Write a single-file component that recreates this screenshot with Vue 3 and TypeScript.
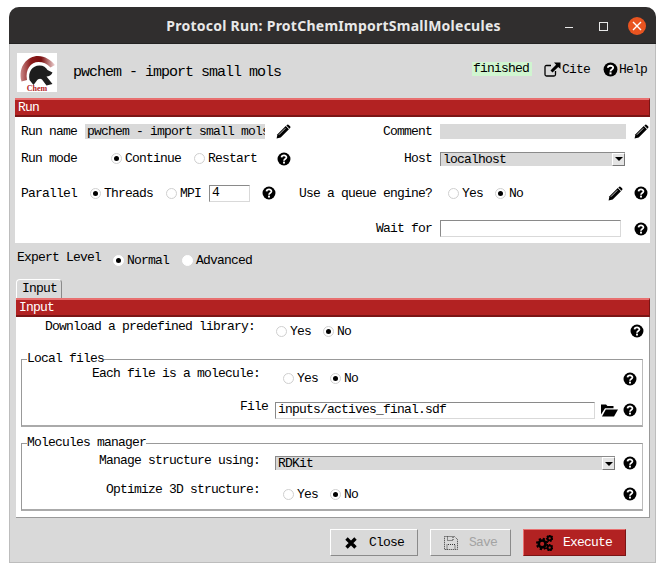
<template>
  <div class="window">
    <svg class="defs" width="0" height="0" aria-hidden="true">
      <symbol id="i-help" viewBox="0 0 16 16">
        <circle cx="8" cy="8" r="7.4" fill="#000" />
        <path d="M5.2 6.2C5.4 3.2 10.8 3.2 10.8 6.1C10.8 8 8 8 8 10" fill="none" stroke="#fff" stroke-width="2" />
        <rect x="6.9" y="11" width="2.2" height="2.2" fill="#fff" />
      </symbol>
      <symbol id="i-pencil" viewBox="0 0 16 16">
        <path d="M0.6 15.4L1.6 11L10.4 2.2L13.8 5.6L5 14.4Z" fill="#000" />
        <path d="M11.4 1.2C12.2 .4 13 .4 13.8 1.2L14.8 2.2C15.6 3 15.6 3.8 14.8 4.6L14.4 5L11 1.6Z" fill="#000" />
        <path d="M3 11.5L10 4.5" stroke="#fff" stroke-width=".8" />
      </symbol>
      <symbol id="i-folder" viewBox="0 0 17 14">
        <path d="M0 11.5V1.5H5L6.5 3H12.5V5.2H4L0 11.5Z" fill="#000" />
        <path d="M1 13.5L4.8 6.5H17L13 13.5Z" fill="#000" />
      </symbol>
      <symbol id="i-gears" viewBox="0 0 18 17">
        <circle cx="6.5" cy="9.5" r="3.6" fill="none" stroke="#000" stroke-width="2.8" />
        <circle cx="6.5" cy="9.5" r="5.6" fill="none" stroke="#000" stroke-width="2" stroke-dasharray="2.4 2" />
        <circle cx="14.5" cy="3.5" r="2.2" fill="none" stroke="#000" stroke-width="2" />
        <circle cx="14.5" cy="3.5" r="3.2" fill="none" stroke="#000" stroke-width="1.4" stroke-dasharray="1.6 1.2" />
        <circle cx="14.5" cy="13.5" r="2.2" fill="none" stroke="#000" stroke-width="2" />
        <circle cx="14.5" cy="13.5" r="3.2" fill="none" stroke="#000" stroke-width="1.4" stroke-dasharray="1.6 1.2" />
      </symbol>
    </svg>

    <div class="titlebar">
      <span class="wintitle">Protocol Run: ProtChemImportSmallMolecules</span>
      <span class="wm wm-min" />
      <span class="wm wm-max" />
      <span class="wm wm-close">
        <svg width="10" height="10" viewBox="0 0 10 10"><path d="M1 1L9 9M9 1L1 9" stroke="#fff" stroke-width="1.4" /></svg>
      </span>
    </div>

    <div class="content">
      <div class="header">
        <svg class="logo" width="40" height="39" viewBox="0 0 40 39">
          <defs>
            <linearGradient id="arc2" x1="0" y1="0" x2="1" y2="0">
              <stop offset="0" stop-color="#c98888" />
              <stop offset=".3" stop-color="#8a1a1a" />
              <stop offset=".6" stop-color="#7a1010" />
              <stop offset="1" stop-color="#f0d4d4" />
            </linearGradient>
          </defs>
          <rect width="40" height="39" fill="#fff" />
          <path d="M4.500 28.500C.5 13 11 3 21 3C28 3 34 7 38 12L33.500 14.500C30 10.500 26 9 21.500 9C14 9 8 16 10 27Z" fill="url(#arc2)" />
          <path d="M12.500 27C11 19 15 12.500 22.500 12.500C26.500 12.500 29 14.500 30.500 17L35.500 19.500C34.500 22 32 23.500 29.500 23.500L35.500 31L29.500 32.500L25 26.500C23 25 21 26 19.500 28L16.500 32Z" fill="#1d1d1d" />
          <text x="20" y="37.500" class="logo-text">Chem</text>
        </svg>
        <span class="proto-label">{{ protocolLabel }}</span>
        <span class="status">finished</span>
        <span class="link cite">
          <svg width="17" height="15" viewBox="0 0 17 15">
            <path d="M7 3.500H2.500C1.500 3.500 1 4 1 5V12.500C1 13.500 1.500 14 2.500 14H10C11 14 11.500 13.500 11.500 12.500V9" fill="none" stroke="#000" stroke-width="1.300" />
            <path d="M10 .5H16.500V7L14.200 4.900L8.500 10.500L6.500 8.500L12.100 2.800Z" fill="#000" />
          </svg>
          Cite
        </span>
        <span class="link help-link"><svg width="15" height="15"><use href="#i-help" /></svg>Help</span>
      </div>

      <div class="bar">Run</div>
      <div class="run-panel">
        <div class="run-row r1">
          <div class="left">
            <span class="lbl w65">Run name</span>
            <span class="entry flat name-entry">{{ protocolLabel }}</span>
            <svg class="ic ml11" width="15" height="15"><use href="#i-pencil" /></svg>
          </div>
          <div class="right">
            <span class="lbl rlabel">Comment</span>
            <span class="entry flat comment-entry" />
            <svg class="ic ml8" width="15" height="15"><use href="#i-pencil" /></svg>
          </div>
        </div>

        <div class="run-row r2">
          <div class="left">
            <span class="lbl w90">Run mode</span>
            <span class="radio on"><i />Continue</span>
            <span class="radio ml13"><i />Restart</span>
            <svg class="ic ml20" width="14" height="14"><use href="#i-help" /></svg>
          </div>
          <div class="right">
            <span class="lbl rlabel">Host</span>
            <span class="combo host-combo">localhost<b><u /></b></span>
          </div>
        </div>

        <div class="run-row r3">
          <div class="left">
            <span class="lbl w69">Parallel</span>
            <span class="radio on"><i />Threads</span>
            <span class="radio ml13"><i />MPI</span>
            <span class="entry sunken threads-entry">4</span>
            <svg class="ic ml12" width="14" height="14"><use href="#i-help" /></svg>
          </div>
          <div class="right">
            <span class="lbl rlabel">Use a queue engine?</span>
            <span class="radio ml8"><i />Yes</span>
            <span class="radio on ml12"><i />No</span>
            <svg class="ic ml85" width="15" height="15"><use href="#i-pencil" /></svg>
            <svg class="ic ml11" width="14" height="14"><use href="#i-help" /></svg>
          </div>
        </div>

        <div class="run-row r4">
          <div class="left" />
          <div class="right">
            <span class="lbl rlabel">Wait for</span>
            <span class="entry sunken wait-entry" />
            <svg class="ic ml13" width="14" height="14"><use href="#i-help" /></svg>
          </div>
        </div>
      </div>

      <div class="expert">
        <span class="expert-label">Expert Level</span>
        <span class="radio on light ml12"><i />Normal</span>
        <span class="radio light ml13"><i />Advanced</span>
      </div>

      <div class="tab">Input</div>
      <div class="input-wrap">
        <div class="bar">Input</div>
        <div class="input-panel">
          <div class="param top-param">
            <span class="plabel download-label">Download a predefined library:</span>
            <span class="radio"><i />Yes</span>
            <span class="radio on ml12"><i />No</span>
            <svg class="ic push" width="14" height="14"><use href="#i-help" /></svg>
          </div>

          <fieldset class="group local">
            <legend>Local files</legend>
            <div class="param file-a">
              <span class="plabel group-label">Each file is a molecule:</span>
              <span class="radio"><i />Yes</span>
              <span class="radio on ml12"><i />No</span>
              <svg class="ic push" width="14" height="14"><use href="#i-help" /></svg>
            </div>
            <div class="param file-b">
              <span class="plabel file-label">File</span>
              <span class="entry sunken file-entry">inputs/actives_final.sdf</span>
              <svg class="ic ml6" width="17" height="14"><use href="#i-folder" /></svg>
              <svg class="ic ml5" width="14" height="14"><use href="#i-help" /></svg>
            </div>
          </fieldset>

          <fieldset class="group manager">
            <legend>Molecules manager</legend>
            <div class="param mgr-a">
              <span class="plabel combo-label">Manage structure using:</span>
              <span class="combo mgr-combo">RDKit<b><u /></b></span>
              <svg class="ic ml8" width="14" height="14"><use href="#i-help" /></svg>
            </div>
            <div class="param mgr-b">
              <span class="plabel group-label">Optimize 3D structure:</span>
              <span class="radio"><i />Yes</span>
              <span class="radio on ml12"><i />No</span>
              <svg class="ic push" width="14" height="14"><use href="#i-help" /></svg>
            </div>
          </fieldset>
        </div>
      </div>

      <div class="footer">
        <button class="btn btn-close" type="button">
          <svg width="12" height="12" viewBox="0 0 12 12"><path d="M1.500 1.500L10.500 10.500M10.500 1.500L1.500 10.500" stroke="#000" stroke-width="3.400" /></svg>
          Close
        </button>
        <button class="btn btn-save" type="button" disabled>
          <svg width="14" height="14" viewBox="0 0 14 14">
            <path d="M.5 .5H10.500L13.500 3.500V13.500H.5Z M3.500 .5V4.500H9V.5 M3 13.500V8.500H11V13.500" fill="none" stroke="#333" stroke-dasharray="1 1" />
          </svg>
          Save
        </button>
        <button class="btn btn-exec" type="button">
          <svg width="17" height="16"><use href="#i-gears" /></svg>
          Execute
        </button>
      </div>
    </div>
  </div>
</template>

<script setup lang="ts">
const protocolLabel: string = 'pwchem - import small mols'
</script>

<style>
html, body { background: #fff; }
</style>

<style scoped>
.window {
  box-sizing: border-box;
  width: 647px;
  height: 556px;
  margin: 7px 0 0 9px;
  display: flex;
  flex-direction: column;
  background: #d9d9d9;
  border: 1px solid #bdbdbd;
  border-top: 0;
  border-radius: 10px 10px 0 0;
  font-family: "Liberation Mono", monospace;
  font-size: 13px;
  letter-spacing: -0.8px;
  line-height: 15px;
  color: #000;
}
.defs { position: absolute; }

/* ── window manager bar ─────────────────────────── */
.titlebar {
  flex: none;
  position: relative;
  height: 37px;
  margin: 0 -1px;
  background: #302e2e;
  border-radius: 10px 10px 0 0;
  border-bottom: 1px solid #222;
  box-sizing: border-box;
  display: flex;
  align-items: center;
  justify-content: center;
}
.wintitle {
  font-family: "Noto Sans", sans-serif;
  font-weight: 700;
  font-size: 14px;
  letter-spacing: .25px;
  color: #e8e8e8;
  margin-left: 2px;
}
.wm { position: absolute; box-sizing: border-box; }
.wm-min { left: 556px; top: 20px; width: 8px; height: 1px; background: #e8e8e8; }
.wm-max { left: 590px; top: 15px; width: 9px; height: 9px; border: 1px solid #e8e8e8; }
.wm-close {
  left: 619px; top: 10px; width: 18px; height: 18px;
  border-radius: 50%;
  background: #e95420;
  display: flex; align-items: center; justify-content: center;
}
.wm-close svg { display: block; }

.content {
  flex: 1;
  display: flex;
  flex-direction: column;
  padding: 0 5px;
}

/* ── header ─────────────────────────────────────── */
.header {
  flex: none;
  height: 54px;
  display: flex;
  align-items: center;
}
.logo { flex: none; margin: 2px 0 0 2px; display: block; }
.logo-text {
  font-family: "Liberation Serif", serif;
  font-weight: 700;
  font-size: 8px;
  letter-spacing: 0;
  fill: #b22222;
  text-anchor: middle;
}
.proto-label {
  margin-left: 16px;
  font-size: 15px;
  letter-spacing: -1px;
  width: 399px;
  padding-top: 3px;
}
.status {
  width: 60px;
  box-sizing: border-box;
  padding: 0 1px;
  height: 14px;
  line-height: 14px;
  background: #d0f5d0;
  margin-top: -4px;
}
.link { display: inline-flex; align-items: center; margin-top: -4px; }
.cite { margin-left: 12px; width: 59px; gap: 1px; }
.help-link { gap: 1px; }
.link svg { display: block; flex: none; }

/* ── red bars ───────────────────────────────────── */
.bar {
  flex: none;
  box-sizing: border-box;
  height: 19px;
  padding-left: 3px;
  background: #b22222;
  border-top: 2px solid #e87070;
  border-bottom: 2px solid #7a1515;
  border-right: 1px solid #7a1515;
  color: #fff;
  line-height: 15px;
}

/* ── run panel ──────────────────────────────────── */
.run-panel {
  flex: none;
  height: 126px;
  background: #fff;
  padding-left: 6px;
  display: flex;
  flex-direction: column;
}
.run-row { display: flex; align-items: center; }
.r1 { height: 28px; }
.r2 { height: 27px; }
.r3 { height: 42px; }
.r4 { height: 29px; }
.left { width: 278px; flex: none; display: flex; align-items: center; }
.right { flex: 1; display: flex; align-items: center; }
.lbl { flex: none; white-space: nowrap; }
.w65 { width: 64px; }
.w90 { width: 90px; }
.w69 { width: 69px; }
.rlabel { width: 133px; margin-right: 8px; text-align: right; }

.ic { flex: none; display: block; }
.ml5 { margin-left: 5px; }
.ml6 { margin-left: 6px; }
.ml8 { margin-left: 8px; }
.ml11 { margin-left: 11px; }
.ml12 { margin-left: 12px; }
.ml13 { margin-left: 13px; }
.ml20 { margin-left: 20px; }
.ml85 { margin-left: 85px; }
.push { margin-left: auto; }

.entry {
  flex: none;
  display: block;
  box-sizing: border-box;
  overflow: hidden;
  white-space: nowrap;
}
.flat { height: 15px; background: #d9d9d9; padding-left: 2px; line-height: 15px; }
.sunken {
  background: #fff;
  height: 17px;
  padding-left: 2px;
  line-height: 14px;
  border: 1px solid #d9d9d9;
  border-top-color: #8a8a8a;
  border-left-color: #8a8a8a;
}
.name-entry { width: 180px; }
.comment-entry { width: 186px; }
.threads-entry { width: 41px; margin-left: 8px; }
.wait-entry { width: 181px; }
.file-entry { width: 320px; }

.combo {
  flex: none;
  position: relative;
  box-sizing: border-box;
  height: 14px;
  padding-left: 2px;
  background: #d9d9d9;
  border-top: 1px solid #8a8a8a;
  border-left: 1px solid #8a8a8a;
  line-height: 13px;
}
.combo b {
  position: absolute;
  right: 0; top: 0;
  width: 13px; height: 13px;
  box-sizing: border-box;
  background: #e4e4e4;
  border: 1px solid #fff;
  border-right-color: #777;
  border-bottom-color: #777;
  display: flex;
  align-items: center;
  justify-content: center;
}
.combo u {
  width: 0; height: 0;
  border: 4px solid transparent;
  border-top: 4px solid #000;
  border-bottom: 0;
}
.host-combo { width: 185px; }
.mgr-combo { width: 340px; }

/* ── radios ─────────────────────────────────────── */
.radio { flex: none; display: inline-flex; align-items: center; gap: 3px; white-space: nowrap; }
.radio i {
  flex: none;
  box-sizing: border-box;
  width: 11px; height: 11px;
  border-radius: 50%;
  border: 1px solid #cfcfcf;
  background: #fff;
  display: flex;
  align-items: center;
  justify-content: center;
}
.radio.on i::after {
  content: "";
  width: 5px; height: 5px;
  border-radius: 50%;
  background: #000;
}
.radio.light i { border-color: #fff; }

/* ── expert level ───────────────────────────────── */
.expert {
  flex: none;
  height: 35px;
  display: flex;
  align-items: center;
  padding: 0 0 1px 2px;
}
.expert-label { margin-top: -7px; }

/* ── input tab ──────────────────────────────────── */
.tab {
  flex: none;
  box-sizing: border-box;
  width: 46px;
  height: 19px;
  margin-left: 1px;
  padding-left: 5px;
  line-height: 18px;
  background: #d9d9d9;
  border: 1px solid #fff;
  border-bottom: 0;
  border-right-color: #8a8a8a;
  border-radius: 4px 4px 0 0;
}
.input-wrap { flex: none; margin-left: 1px; }
.input-panel {
  box-sizing: border-box;
  height: 201px;
  background: #fff;
  border-right: 1px solid #999;
  border-bottom: 1px solid #999;
}

.param { display: flex; align-items: center; }
.plabel { flex: none; text-align: right; white-space: nowrap; margin-top: -10px; }

.top-param { height: 28px; padding-right: 5px; }
.download-label { width: 239px; margin-right: 21px; }

.group {
  margin: 0 0 0 5px;
  padding: 0;
  width: 622px;
  box-sizing: border-box;
  border: 1px solid #999;
  border-right-color: #bbb;
  border-bottom: 2px solid #aaa;
}
.group legend { padding: 0; margin-left: 5px; line-height: 14px; }
.local { margin-top: 7px; height: 75px; }
.manager { margin-top: 9px; height: 75px; }
.group .param { padding-right: 5px; }
.group-label { width: 238px; margin-right: 23px; }
.file-label { width: 246px; margin-right: 7px; margin-top: -7px; }
.combo-label { width: 238px; margin-right: 15px; margin-top: -6px; }
.file-a { height: 27px; margin-top: -1px; }
.file-b { height: 28px; margin-top: 4px; }
.mgr-a { height: 20px; margin-top: 3px; }
.mgr-b { height: 30px; margin-top: 6px; }

/* ── footer buttons ─────────────────────────────── */
.footer {
  flex: none;
  display: flex;
  justify-content: flex-end;
  gap: 12px;
  padding: 11px 24px 0 0;
}
.btn {
  box-sizing: border-box;
  height: 27px;
  display: flex;
  align-items: center;
  background: #d9d9d9;
  border: 1px solid #fff;
  border-right-color: #8a8a8a;
  border-bottom-color: #8a8a8a;
  border-radius: 0;
  font: inherit;
  letter-spacing: inherit;
  color: #000;
  padding: 0;
}
.btn svg { display: block; flex: none; }
.btn-close { width: 88px; padding-left: 14px; gap: 12px; }
.btn-save { width: 81px; padding-left: 13px; gap: 11px; color: #a3a3a3; }
.btn-exec {
  width: 103px;
  padding-left: 12px;
  gap: 10px;
  background: #b22222;
  color: #fff;
  border-color: #e87070 #7a1515 #7a1515 #e87070;
}
</style>
